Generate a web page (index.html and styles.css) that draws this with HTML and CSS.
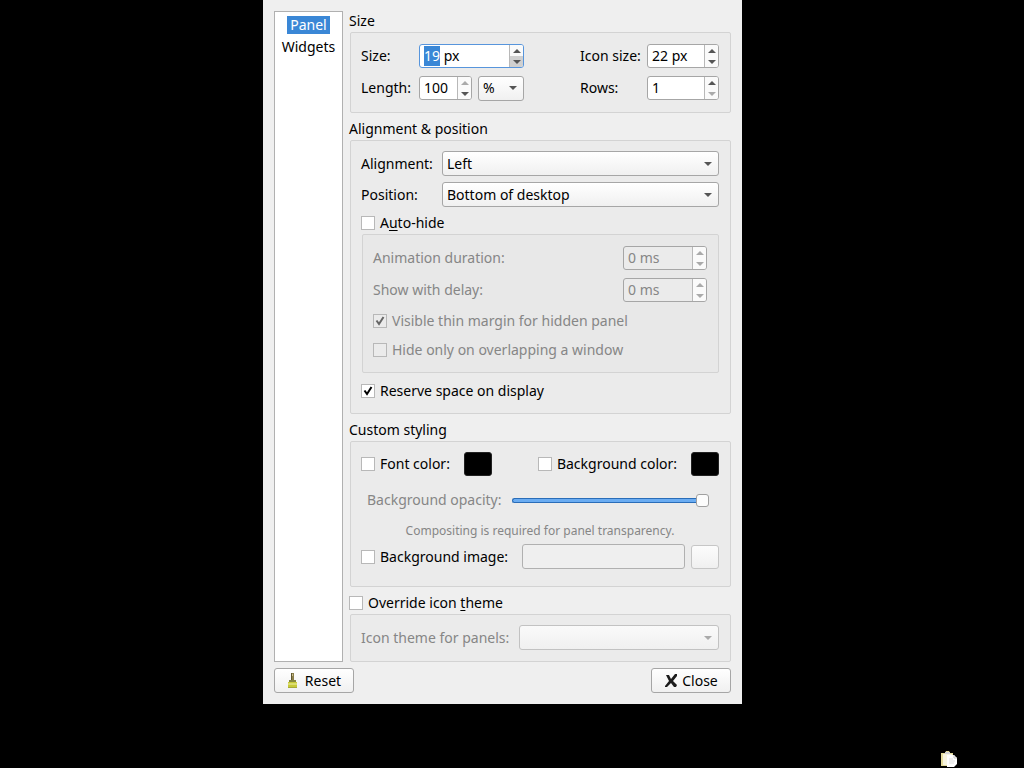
FILE: index.html
```html
<!DOCTYPE html>
<html lang="en">
<head>
    <meta charset="UTF-8">
    <meta name="viewport" content="width=device-width, initial-scale=1.0">
    <title>Configure Panel</title>
    <link rel="stylesheet" href="styles.css">
</head>
<body>
    <div class="desktop">
        <main class="dialog">
            <div class="dialog-body">
                <!-- Page list -->
                <nav class="page-list">
                    <a href="#panel" class="page-link active">Panel</a>
                    <a href="#widgets" class="page-link">Widgets</a>
                </nav>

                <form class="page" id="panel">
                    <!-- Size -->
                    <h2 class="group-title">Size</h2>
                    <section class="group size-grid">
                        <label for="size">Size:</label>
                        <span class="spin focused">
                            <input type="text" id="size" value="19 px">
                            <span class="spin-buttons">
                                <button type="button" class="up" aria-label="Increase size"></button>
                                <button type="button" class="down pressed" aria-label="Decrease size"></button>
                            </span>
                        </span>
                        <label for="icon-size" class="right-label">Icon size:</label>
                        <span class="spin">
                            <input type="text" id="icon-size" value="22 px">
                            <span class="spin-buttons">
                                <button type="button" class="up" aria-label="Increase icon size"></button>
                                <button type="button" class="down" aria-label="Decrease icon size"></button>
                            </span>
                        </span>
                        <label for="length">Length:</label>
                        <span class="length-fields">
                            <span class="spin">
                                <input type="text" id="length" value="100">
                                <span class="spin-buttons">
                                    <button type="button" class="up" aria-label="Increase length" disabled></button>
                                    <button type="button" class="down" aria-label="Decrease length"></button>
                                </span>
                            </span>
                            <select class="combo unit" aria-label="Length unit">
                                <option>%</option>
                                <option>px</option>
                            </select>
                        </span>
                        <label for="rows" class="right-label">Rows:</label>
                        <span class="spin">
                            <input type="text" id="rows" value="1">
                            <span class="spin-buttons">
                                <button type="button" class="up" aria-label="Increase rows"></button>
                                <button type="button" class="down" aria-label="Decrease rows" disabled></button>
                            </span>
                        </span>
                    </section>

                    <!-- Alignment & position -->
                    <h2 class="group-title">Alignment &amp; position</h2>
                    <section class="group">
                        <div class="combo-grid">
                            <label for="alignment">Alignment:</label>
                            <select class="combo" id="alignment">
                                <option>Left</option>
                                <option>Center</option>
                                <option>Right</option>
                            </select>
                            <label for="position">Position:</label>
                            <select class="combo" id="position">
                                <option>Bottom of desktop</option>
                                <option>Top of desktop</option>
                            </select>
                        </div>
                        <div class="check group-check">
                            <input type="checkbox" id="auto-hide">
                            <label for="auto-hide">A<u>u</u>to-hide</label>
                        </div>
                        <div class="group nested disabled">
                            <div class="spin-row">
                                <label for="duration">Animation duration:</label>
                                <span class="spin">
                                    <input type="text" id="duration" value="0 ms" disabled>
                                    <span class="spin-buttons">
                                        <button type="button" class="up" aria-label="Increase duration" disabled></button>
                                        <button type="button" class="down" aria-label="Decrease duration" disabled></button>
                                    </span>
                                </span>
                            </div>
                            <div class="spin-row">
                                <label for="delay">Show with delay:</label>
                                <span class="spin">
                                    <input type="text" id="delay" value="0 ms" disabled>
                                    <span class="spin-buttons">
                                        <button type="button" class="up" aria-label="Increase delay" disabled></button>
                                        <button type="button" class="down" aria-label="Decrease delay" disabled></button>
                                    </span>
                                </span>
                            </div>
                            <div class="check">
                                <input type="checkbox" id="thin-margin" checked disabled>
                                <label for="thin-margin">Visible thin margin for hidden panel</label>
                            </div>
                            <div class="check">
                                <input type="checkbox" id="overlap" disabled>
                                <label for="overlap">Hide only on overlapping a window</label>
                            </div>
                        </div>
                        <div class="check reserve">
                            <input type="checkbox" id="reserve" checked>
                            <label for="reserve">Reserve space on display</label>
                        </div>
                    </section>

                    <!-- Custom styling -->
                    <h2 class="group-title">Custom styling</h2>
                    <section class="group styling">
                        <div class="color-row">
                            <div class="check">
                                <input type="checkbox" id="font-color">
                                <label for="font-color">Font color:</label>
                                <button type="button" class="color-button" aria-label="Pick font color"></button>
                            </div>
                            <div class="check">
                                <input type="checkbox" id="bg-color">
                                <label for="bg-color">Background color:</label>
                                <button type="button" class="color-button" aria-label="Pick background color"></button>
                            </div>
                        </div>
                        <div class="opacity-row disabled">
                            <label for="opacity">Background opacity:</label>
                            <input type="range" class="slider" id="opacity" min="0" max="100" value="100" disabled>
                        </div>
                        <p class="hint">Compositing is required for panel transparency.</p>
                        <div class="check image-row">
                            <input type="checkbox" id="bg-image">
                            <label for="bg-image">Background image:</label>
                            <input type="text" class="image-path" aria-label="Background image file" disabled>
                            <button type="button" class="browse-button" aria-label="Browse" disabled></button>
                        </div>
                    </section>

                    <!-- Icon theme -->
                    <div class="check group-check">
                        <input type="checkbox" id="override">
                        <label for="override">Override icon <u>t</u>heme</label>
                    </div>
                    <section class="group theme-row disabled">
                        <label for="icon-theme">Icon theme for panels:</label>
                        <select class="combo" id="icon-theme" disabled></select>
                    </section>
                </form>
            </div>

            <footer class="dialog-buttons">
                <button type="button" class="push-button">
                    <svg width="16" height="16" viewBox="0 0 16 16">
                        <path d="M4 0h3v7H4z" fill="#8c7f4a"/>
                        <path d="M4 0h1v7H4z" fill="#5f5630"/>
                        <path d="M5 1h1v2H5z" fill="#c9bf8e"/>
                        <path d="M2 7h7v3H2z" fill="#85873f"/>
                        <path d="M1 9h9v6H1z" fill="#c8ca38"/>
                        <path d="M1 10h9v2H1z" fill="#dbdd70"/>
                        <path d="M1 14h9v1H1z" fill="#a5a83a"/>
                    </svg>
                    Reset
                </button>
                <button type="button" class="push-button">
                    <svg width="16" height="16" viewBox="0 0 16 16">
                        <path d="M2 2h3l2 4 4-5 2 0v2L9 8l4 4-1 2h-2L7 10l-4 4-2 0 0-1 4-5z" fill="#1c1c1c"/>
                    </svg>
                    Close
                </button>
            </footer>
        </main>

        <svg class="tray-icon" width="18" height="18" viewBox="0 0 18 18">
            <path d="M1 3h4l1-2h3l1 2h3v13H1z" fill="#e5dc9c"/>
            <path d="M3 4h9v11H3z" fill="#f7f4df"/>
            <path d="M5 2h5v2H5z" fill="#d5d5d5"/>
            <path d="M7 5h7l3 3v6l-3 3H7z" fill="#fff"/>
            <path d="M14 5v3h3" fill="none" stroke="#c8c8c8"/>
            <path d="M9 9h4M9 11h6M9 13h5" stroke="#ddd"/>
        </svg>
    </div>

    <script>
        // Start with the number of the size box selected
        const sizeInput = document.getElementById('size');
        sizeInput.focus();
        sizeInput.setSelectionRange(0, 2);
    </script>
</body>
</html>
```
FILE: styles.css
```css
* {
    box-sizing: border-box;
}

body {
    margin: 0;
    background: #000;
    color: #000;
    font: 14px/20px "Noto Sans", sans-serif;
}

button,
input,
select {
    margin: 0;
    padding: 0;
    font: inherit;
    color: inherit;
}

u {
    text-underline-offset: 2px;
}

/* Desktop */
.desktop {
    position: relative;
    display: grid;
    grid-template-columns: 263fr 479fr 282fr;
    align-items: start;
    min-height: 100vh;
}

.tray-icon {
    position: absolute;
    right: 66px;
    bottom: 0;
}

/* Dialog */
.dialog {
    grid-column: 2;
    padding: 11px;
    background: #efefef;
}

.dialog-body {
    display: flex;
    gap: 6px;
}

.page-list {
    flex: 0 0 69px;
    padding: 4px 0;
    border: 1px solid #b0b0b0;
    background: #fff;
    text-align: center;
}

.page-link {
    display: table;
    margin: 0 auto 4px;
    padding: 0 3px;
    color: #000;
    line-height: 18px;
    text-decoration: none;
}

.page-link.active {
    background: #3a87d6;
    color: #fff;
}

.page {
    flex: 1;
    min-width: 0;
}

/* Groups */
.group-title {
    margin: 6px 0 0;
    padding-bottom: 1px;
    font-size: 14px;
    font-weight: normal;
}

.group-title:first-child {
    margin-top: 0;
}

.group {
    margin-left: 1px;
    padding: 10px 11px 11px 10px;
    border: 1px solid #d3d3d3;
    border-radius: 2px;
    background: #ebebeb;
}

.disabled {
    color: #868686;
}

.size-grid {
    display: grid;
    grid-template-columns: 58px 105px 1fr 72px;
    align-items: center;
    row-gap: 8px;
    padding-top: 11px;
    padding-bottom: 12px;
}

.right-label {
    padding-right: 5px;
    margin-left: 56px;
    white-space: nowrap;
}

.length-fields {
    display: flex;
    align-items: center;
    gap: 6px;
    height: 24px;
}

.length-fields .spin {
    flex: 1;
}

/* Spin boxes */
.spin {
    display: flex;
    height: 24px;
    border: 1px solid #a6a6a6;
    border-radius: 3px;
    background: #fff;
    overflow: hidden;
}

.spin.focused {
    border-color: #5795dc;
}

.spin input {
    flex: 1;
    width: 0;
    min-width: 0;
    padding-left: 4px;
    border: none;
    outline: none;
    background: none;
}

.spin input::selection {
    background: #3a87d6;
    color: #fff;
}

.spin-buttons {
    display: flex;
    flex-direction: column;
    width: 14px;
    border-left: 1px solid #b8b8b8;
}

.spin-buttons button {
    display: flex;
    flex: 1;
    align-items: center;
    justify-content: center;
    border: none;
    background: #fafafa;
}

.spin-buttons button::before {
    content: "";
    border: 4px solid transparent;
}

.spin-buttons .up::before {
    border-top: none;
    border-bottom-color: #555;
}

.spin-buttons .down::before {
    border-bottom: none;
    border-top-color: #555;
}

.spin-buttons .up:disabled::before {
    border-bottom-color: #aaa;
}

.spin-buttons .down:disabled::before {
    border-top-color: #aaa;
}

.spin-buttons .pressed {
    background: #d0d0d0;
}

.disabled .spin {
    background: #ebebeb;
}

/* Combo boxes */
.combo {
    appearance: none;
    width: 100%;
    height: 25px;
    padding: 0 20px 0 4px;
    border: 1px solid #a6a6a6;
    border-radius: 3px;
    background:
        url("data:image/svg+xml,%3Csvg xmlns='http://www.w3.org/2000/svg' width='8' height='4'%3E%3Cpath d='M0 0h8L4 4z' fill='%23555'/%3E%3C/svg%3E") no-repeat right 6px center,
        linear-gradient(#fff, #f0f0f0);
}

.combo:disabled {
    border-color: #c2c2c2;
    background:
        url("data:image/svg+xml,%3Csvg xmlns='http://www.w3.org/2000/svg' width='8' height='4'%3E%3Cpath d='M0 0h8L4 4z' fill='%23aaa'/%3E%3C/svg%3E") no-repeat right 6px center,
        linear-gradient(#fafafa, #f0f0f0);
    opacity: 1;
}

.unit {
    width: 46px;
}

.combo-grid {
    display: grid;
    grid-template-columns: 81px 1fr;
    align-items: center;
    row-gap: 6px;
}

/* Check boxes */
.check {
    display: flex;
    align-items: center;
}

.check input[type="checkbox"] {
    appearance: none;
    width: 14px;
    height: 14px;
    margin-right: 5px;
    border: 1px solid #b8b8b8;
    background: #fff center no-repeat;
}

.check input[type="checkbox"]:checked {
    background-image: url("data:image/svg+xml,%3Csvg xmlns='http://www.w3.org/2000/svg' width='12' height='12'%3E%3Cpath d='M2.500 5.500L5 9L9.500 2' fill='none' stroke='%23000' stroke-width='2'/%3E%3C/svg%3E");
}

.check input[type="checkbox"]:disabled {
    background-color: #ebebeb;
}

.check input[type="checkbox"]:checked:disabled {
    background-image: url("data:image/svg+xml,%3Csvg xmlns='http://www.w3.org/2000/svg' width='12' height='12'%3E%3Cpath d='M2.500 5.500L5 9L9.500 2' fill='none' stroke='%23666' stroke-width='2'/%3E%3C/svg%3E");
}

.group-check {
    margin: 6px 0 1px;
}

.nested {
    display: grid;
    gap: 8px;
    padding-top: 11px;
    padding-bottom: 12px;
    background: #e8e8e8;
}

.nested .check {
    height: 21px;
}

.spin-row {
    display: flex;
    align-items: center;
    justify-content: space-between;
}

.spin-row .spin {
    width: 84px;
}

.reserve {
    margin: 8px 0 1px;
}

/* Custom styling */
.styling {
    padding-bottom: 17px;
}

.color-row {
    display: flex;
    justify-content: space-between;
}

.color-button {
    width: 28px;
    height: 24px;
    margin-left: 14px;
    border: 1px solid #222;
    border-radius: 3px;
    background: #000;
}

.opacity-row {
    display: flex;
    align-items: center;
    gap: 10px;
    margin: 14px 10px 0 6px;
}

.slider {
    flex: 1;
    min-width: 0;
    height: 14px;
    appearance: none;
    background: none;
}

.slider::-webkit-slider-runnable-track {
    height: 5px;
    border: 1px solid #2a6db8;
    border-right: none;
    border-radius: 3px;
    background: #6aacf2;
}

.slider::-webkit-slider-thumb {
    appearance: none;
    width: 13px;
    height: 13px;
    margin-top: -5px;
    border: 1px solid #a0a0a0;
    border-radius: 3px;
    background: #fcfcfc;
}

.hint {
    margin: 11px 0 3px;
    color: #868686;
    font-size: 12px;
    text-align: center;
}

.image-path {
    flex: 1;
    min-width: 0;
    height: 25px;
    margin: 0 6px 0 14px;
    border: 1px solid #b0b0b0;
    border-radius: 3px;
    background: #efefef;
}

.browse-button {
    width: 28px;
    height: 24px;
    border: 1px solid #c6c6c6;
    border-radius: 3px;
    background: linear-gradient(#fcfcfc, #f0f0f0);
}

/* Icon theme */
.theme-row {
    display: flex;
    align-items: center;
    gap: 10px;
    white-space: nowrap;
}

/* Bottom buttons */
.dialog-buttons {
    display: flex;
    justify-content: space-between;
    margin-top: 6px;
}

.push-button {
    display: flex;
    align-items: center;
    justify-content: center;
    gap: 2px;
    min-width: 80px;
    height: 25px;
    border: 1px solid #a6a6a6;
    border-radius: 3px;
    background: linear-gradient(#fff, #f0f0f0);
}
```
